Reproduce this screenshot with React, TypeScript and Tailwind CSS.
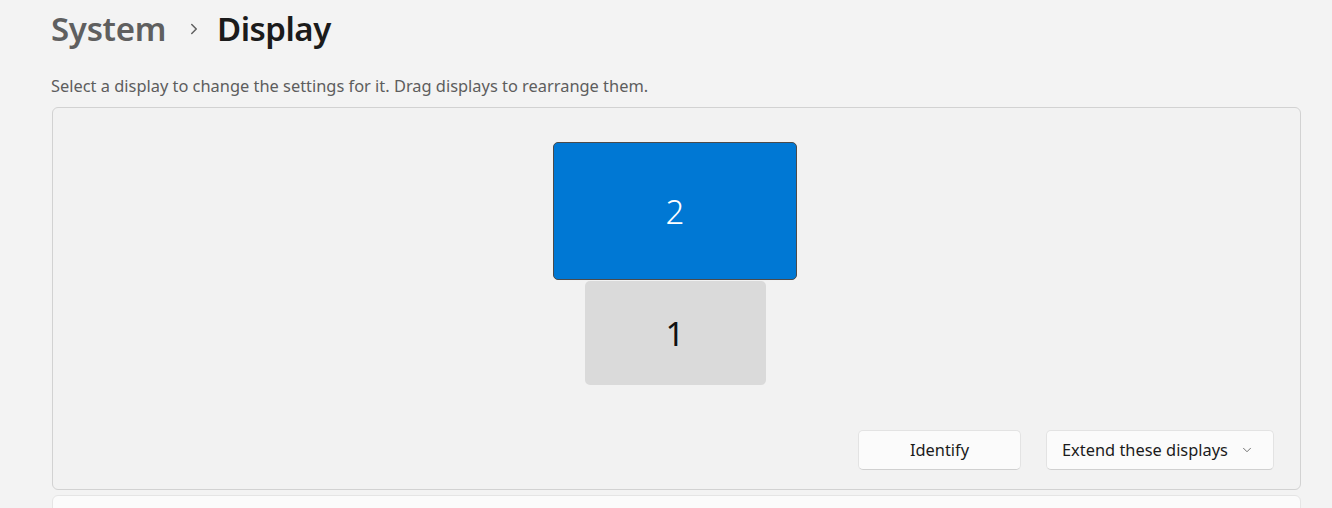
import { ChevronRight, ChevronDown } from "lucide-react";

function App() {
  return (
    <main
      className="w-[1332px] h-[508px] overflow-hidden bg-[#f3f3f3] pl-[51px] pr-[31px]"
      style={{ fontFamily: '"Noto Sans", "Open Sans", sans-serif' }}
    >
      {/* breadcrumb */}
      <div className="flex items-center h-[58px]">
        <span className="text-[33px] font-semibold text-[#5f5f5f] tracking-[-0.3px]">System</span>
        <ChevronRight className="w-[18px] h-[18px] text-[#5f5f5f] ml-[19px] mr-[14px]" strokeWidth={2} />
        <span className="text-[33px] font-semibold text-[#1b1b1b] tracking-[-0.5px]">Display</span>
      </div>

      <p className="mt-[16px] text-[16.4px] text-[#5d5d5d] leading-[24px]">
        Select a display to change the settings for it. Drag displays to rearrange them.
      </p>

      {/* arrangement panel */}
      <div className="mt-[9px] ml-[1px] h-[383px] rounded-[6px] border border-[#d2d2d2] bg-[#f2f2f2] flex flex-col">
        <div className="flex flex-col items-center pt-[34px] pr-[3px]">
          <div className="w-[244px] h-[138px] rounded-[5px] border border-[#4b4b4b] bg-[#0078d4] flex items-center justify-center">
            <span className="text-[33px] text-white font-light leading-none">2</span>
          </div>
          <div className="w-[181px] h-[104px] mt-[1px] rounded-[5px] bg-[#dadada] flex items-center justify-center">
            <span className="text-[33px] text-[#111] leading-none">1</span>
          </div>
        </div>
        <div className="flex justify-end gap-[25px] mt-[45px] pr-[26px]">
          <button className="w-[163px] h-[40px] rounded-[5px] border border-[#e3e3e3] border-b-[#d0d0d0] bg-[#fbfbfb] text-[16.4px] text-[#1b1b1b]">
            Identify
          </button>
          <button className="w-[228px] h-[40px] rounded-[5px] border border-[#e3e3e3] border-b-[#d0d0d0] bg-[#fbfbfb] text-[16.4px] text-[#1b1b1b] flex items-center justify-between pl-[15px] pr-[19px]">
            <span>Extend these displays</span>
            <ChevronDown className="w-[14px] h-[14px] text-[#5f5f5f]" strokeWidth={1.5} />
          </button>
        </div>
      </div>

      {/* next card */}
      <div className="mt-[5px] ml-[1px] h-[40px] rounded-t-[6px] border border-[#e5e5e5] bg-[#fbfbfb]" />
    </main>
  );
}

export default App;
